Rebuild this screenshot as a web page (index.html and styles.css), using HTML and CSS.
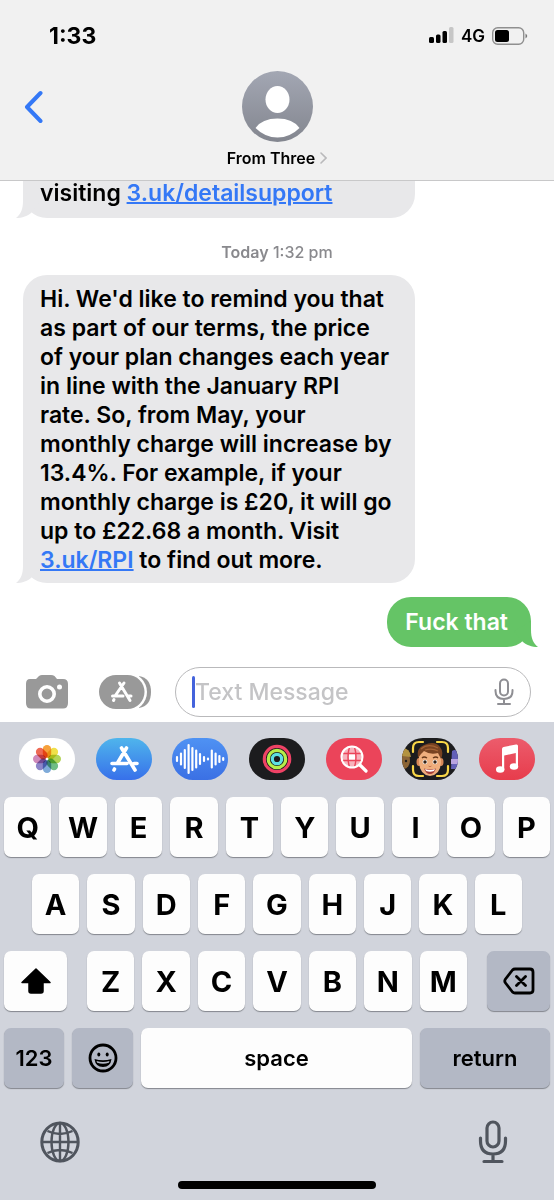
FILE: index.html
```
<!DOCTYPE html>
<html lang="en">
<head>
  <meta charset="UTF-8">
  <meta name="viewport" content="width=device-width, initial-scale=1">
  <title>Messages</title>
  <link rel="stylesheet" href="styles.css">
</head>
<body>

  <header class="header">
    <div class="status">
      <span class="time">1:33</span>
      <div class="status-right">
        <svg width="25" height="17" viewBox="0 0 25 17">
          <rect x="0" y="10" width="5" height="6" rx="1.5"/>
          <rect x="7" y="7.500" width="4.500" height="8.500" rx="1.500"/>
          <rect x="13.500" y="4" width="4.500" height="12" rx="1.500"/>
          <rect x="20" y="0" width="4.500" height="16" rx="1.500" fill="#c6c6c6"/>
        </svg>
        <span class="network">4G</span>
        <svg width="36" height="18" viewBox="0 0 36 18">
          <rect x="0.700" y="0.700" width="31" height="16.500" rx="5" fill="none" stroke="#8f8f8f" stroke-width="1.400"/>
          <rect x="3" y="3" width="14" height="12" rx="2.500"/>
          <path d="M33.500 6.500 Q37 9 33.500 11.500Z" fill="#777"/>
        </svg>
      </div>
    </div>
    <nav class="nav">
      <button class="back" aria-label="Back">
        <svg width="20" height="34" viewBox="0 0 20 34"><path d="M17.500 3 4 17l13.500 14" fill="none" stroke="#3478f6" stroke-width="4" stroke-linecap="round" stroke-linejoin="round"/></svg>
      </button>
      <button class="contact">
        <svg width="71" height="71" viewBox="0 0 71 71">
          <defs>
            <linearGradient id="avatar" x1="0" y1="0" x2="0" y2="1">
              <stop offset="0" stop-color="#a3a7b3"/>
              <stop offset="1" stop-color="#83868f"/>
            </linearGradient>
          </defs>
          <circle cx="35.500" cy="35.500" r="35.500" fill="url(#avatar)"/>
          <ellipse cx="35.500" cy="28.500" rx="12" ry="13.500" fill="#fff"/>
          <path d="M13.500 57 Q20 47.500 35.500 47.500 T57.500 57 Q48 66.500 35.500 66.500 T13.500 57Z" fill="#fff"/>
        </svg>
        <span class="contact-name">From Three
          <svg width="7" height="12" viewBox="0 0 7 12"><path d="M1 1l5 5-5 5" fill="none" stroke="#b9b9bb" stroke-width="1.600" stroke-linecap="round"/></svg>
        </span>
      </button>
    </nav>
  </header>

  <main class="messages">
    <div class="bubble received continued">
      visiting <a href="#">3.uk/detailsupport</a>
      <svg class="tail" width="24" height="26" viewBox="0 0 24 26"><path d="M7 0V9C7 17 5 22 0 26C6 26 12 24 16 20L24 10Z"/></svg>
    </div>

    <p class="timestamp"><b>Today</b> 1:32 pm</p>

    <div class="bubble received">
      Hi. We'd like to remind you that<br>
      as part of our terms, the price<br>
      of your plan changes each year<br>
      in line with the January RPI<br>
      rate. So, from May, your<br>
      monthly charge will increase by<br>
      13.4%. For example, if your<br>
      monthly charge is £20, it will go<br>
      up to £22.68 a month. Visit<br>
      <a href="#">3.uk/RPI</a> to find out more.
      <svg class="tail" width="24" height="26" viewBox="0 0 24 26"><path d="M7 0V9C7 17 5 22 0 26C6 26 12 24 16 20L24 10Z"/></svg>
    </div>

    <div class="bubble sent">
      Fuck that
      <svg class="tail" width="24" height="26" viewBox="0 0 24 26"><path d="M17 0V9C17 17 19 22 24 26C18 26 12 24 8 20L0 10Z"/></svg>
    </div>
  </main>

  <form class="compose">
    <button type="button" class="icon-button" aria-label="Camera">
      <svg width="44" height="36" viewBox="0 0 44 36">
        <path d="M5 5H11L14 2Q15.500 1 17 1H26Q28 1 29.500 2L32 5H38Q43 5 43 10V29Q43 34.500 38 34.500H6Q1 34.500 1 29V10Q1 5 5 5Z" fill="#999"/>
        <circle cx="22" cy="20" r="7.200" fill="none" stroke="#fff" stroke-width="3.600"/>
        <circle cx="34.500" cy="13" r="2.500" fill="#fff"/>
      </svg>
    </button>
    <button type="button" class="icon-button" aria-label="Apps">
      <svg width="52" height="34" viewBox="0 0 52 34">
        <path d="M40 1Q52 3 52 17T40 33Z" fill="#999"/>
        <rect x="-3" y="-2" width="51" height="38" rx="19" fill="#fff"/>
        <rect width="45.500" height="34" rx="17" fill="#999"/>
        <g fill="none" stroke="#fff" stroke-width="3" stroke-linecap="round">
          <path d="M25 8 16 21M20.500 8 31 25.500M13.500 21H24M29 21H32M15 24.500 14.500 25.500"/>
        </g>
      </svg>
    </button>
    <div class="field">
      <span class="caret"></span>
      <input type="text" placeholder="Text Message" aria-label="Text Message">
      <button type="button" class="icon-button" aria-label="Dictate">
        <svg width="20" height="28" viewBox="0 0 20 28" fill="none" stroke="#8e8e93" stroke-width="2" stroke-linecap="round">
          <rect x="6" y="1.500" width="8" height="16" rx="4"/>
          <path d="M1.500 12V13Q1.500 21 10 21T18.500 13V12M10 21V26M4 26H16"/>
        </svg>
      </button>
    </div>
  </form>

  <section class="keyboard">
    <div class="apps">
      <button class="app photos" aria-label="Photos">
        <svg width="30" height="30" viewBox="-15 -15 30 30">
          <g class="petals">
            <rect x="-4.200" y="-14" width="8.400" height="13" rx="4.200" fill="#f6a13c"/>
            <rect x="-4.200" y="-14" width="8.400" height="13" rx="4.200" fill="#f0e04a" transform="rotate(45)"/>
            <rect x="-4.200" y="-14" width="8.400" height="13" rx="4.200" fill="#b3d458" transform="rotate(90)"/>
            <rect x="-4.200" y="-14" width="8.400" height="13" rx="4.200" fill="#6fbd85" transform="rotate(135)"/>
            <rect x="-4.200" y="-14" width="8.400" height="13" rx="4.200" fill="#7fabd9" transform="rotate(180)"/>
            <rect x="-4.200" y="-14" width="8.400" height="13" rx="4.200" fill="#8e86c9" transform="rotate(225)"/>
            <rect x="-4.200" y="-14" width="8.400" height="13" rx="4.200" fill="#cf8abb" transform="rotate(270)"/>
            <rect x="-4.200" y="-14" width="8.400" height="13" rx="4.200" fill="#ee6a55" transform="rotate(315)"/>
          </g>
          <circle r="1.300" fill="#fff"/>
        </svg>
      </button>
      <button class="app store" aria-label="App Store">
        <svg width="30" height="28" viewBox="0 0 30 28" fill="none" stroke="#fff" stroke-width="3.600" stroke-linecap="round">
          <path d="M17.500 3 8.500 18M12.500 3 26 25M3 18.500H18M25 18.500H28M5.500 24 5 25"/>
        </svg>
      </button>
      <button class="app audio" aria-label="Audio Messages">
        <svg width="50" height="32" viewBox="0 0 50 32" stroke="#fff" stroke-width="2.200" stroke-linecap="round">
          <path d="M2 14V18M6 10.500V21.500M9.800 7V25M13.600 2V30M17.400 5V27M21.200 7.500V24.500M25 11V21M29 14V18M33 15.500V16.500M36.800 7.500V24.500M40.600 10.500V21.500M44.400 13V19M48.200 15V17"/>
        </svg>
      </button>
      <button class="app activity" aria-label="Activity">
        <svg width="30" height="30" viewBox="0 0 30 30" fill="none" stroke-width="3.200">
          <circle cx="15" cy="15" r="12.700" stroke="#ef4265"/>
          <circle cx="15" cy="15" r="8.700" stroke="#b5ee4b"/>
          <circle cx="15" cy="15" r="4.700" stroke="#5de0e2"/>
        </svg>
      </button>
      <button class="app images" aria-label="Images">
        <svg width="28" height="28" viewBox="0 0 28 28" fill="none" stroke="#fff" stroke-linecap="round">
          <circle cx="12" cy="12" r="10.500" fill="#f7b3bd" stroke="none"/>
          <path d="M9.500 2Q6.500 12 9.500 22M14.500 2Q17.500 12 14.500 22M2 8.500H22M2 15.500H22" stroke="#eb445a" stroke-width="1.400"/>
          <rect x="9" y="9.500" width="6" height="5" fill="#fff" stroke="none"/>
          <circle cx="12" cy="12" r="10.500" stroke-width="2"/>
          <path d="M20 20 26 26" stroke-width="3.200"/>
        </svg>
      </button>
      <button class="app memoji" aria-label="Memoji">
        <svg width="56" height="42" viewBox="0 0 56 42">
          <ellipse cx="2" cy="22" rx="6" ry="9" fill="#8b6436"/>
          <path d="M0 10Q8 10 9 19L0 18Z" fill="#b39340"/>
          <circle cx="4" cy="23" r="1.200" fill="#1c1c1e"/>
          <path d="M50 13Q55 10 56 17V31H49Z" fill="#6360b7"/>
          <path d="M49 21H56V26H49Z" fill="#b9a4df"/>
          <ellipse cx="17" cy="24" rx="2.500" ry="4" fill="#d88959"/>
          <ellipse cx="39" cy="24" rx="2.500" ry="4" fill="#d88959"/>
          <path d="M17 18Q17 10 28 10T39 18V25Q38 37 28 38Q18 37 17 25Z" fill="#efae7d"/>
          <path d="M16 20Q14 10 22 7Q33 2 38 9Q42 14 39 21L36 15Q28 17 22 13L19 16Z" fill="#794322"/>
          <path d="M19 11Q26 5 36 10M23 12Q30 10 36 13" fill="none" stroke="#a46336" stroke-width="1.200"/>
          <path d="M20 20Q22 18 25 20M31 20Q34 18 36 20" fill="none" stroke="#653719" stroke-width="1.400"/>
          <ellipse cx="23" cy="24" rx="2.400" ry="2.200" fill="#fff"/>
          <ellipse cx="33" cy="24" rx="2.400" ry="2.200" fill="#fff"/>
          <circle cx="23" cy="24" r="1.700" fill="#352114"/>
          <circle cx="33" cy="24" r="1.700" fill="#352114"/>
          <path d="M26.500 28Q28 29.500 29.500 28" fill="none" stroke="#c77950"/>
          <path d="M22 30.500Q28 32.500 34 30.500Q32 36 28 36T22 30.500Z" fill="#a23d37"/>
          <path d="M23 31Q28 33 33 31L32 33Q28 34.500 24 33Z" fill="#fff"/>
          <path d="M11 14V10Q11 4 17 4H21M35 4H40Q46 4 46 10V14M11 28V32Q11 38 17 38H21M35 38H40Q46 38 46 32V28" fill="none" stroke="#f8d648" stroke-width="2.200" stroke-linecap="round"/>
        </svg>
      </button>
      <button class="app music" aria-label="Music">
        <svg width="24" height="30" viewBox="0 0 24 30">
          <path d="M7 5Q7 3.500 8.500 3L21 .500Q23 0 23 2V23H20.800V9L9.200 11.500V26H7Z" fill="#fff"/>
          <ellipse cx="5.200" cy="25.500" rx="4.200" ry="3.300" fill="#fff"/>
          <ellipse cx="19" cy="22.500" rx="4.200" ry="3.300" fill="#fff"/>
        </svg>
      </button>
    </div>

    <div class="keys">
      <div class="row">
        <button class="key">Q</button>
        <button class="key">W</button>
        <button class="key">E</button>
        <button class="key">R</button>
        <button class="key">T</button>
        <button class="key">Y</button>
        <button class="key">U</button>
        <button class="key">I</button>
        <button class="key">O</button>
        <button class="key">P</button>
      </div>
      <div class="row row-middle">
        <button class="key">A</button>
        <button class="key">S</button>
        <button class="key">D</button>
        <button class="key">F</button>
        <button class="key">G</button>
        <button class="key">H</button>
        <button class="key">J</button>
        <button class="key">K</button>
        <button class="key">L</button>
      </div>
      <div class="row row-shift">
        <button class="key" aria-label="Shift">
          <svg width="32" height="28" viewBox="0 0 32 28"><path d="M16 2 30 15.500H23V24Q23 26 21 26H11Q9 26 9 24V15.500H2Z" stroke="#000" stroke-width="1.500" stroke-linejoin="round"/></svg>
        </button>
        <div class="row letters">
          <button class="key">Z</button>
          <button class="key">X</button>
          <button class="key">C</button>
          <button class="key">V</button>
          <button class="key">B</button>
          <button class="key">N</button>
          <button class="key">M</button>
        </div>
        <button class="key dark" aria-label="Delete">
          <svg width="32" height="28" viewBox="0 0 32 28" fill="none" stroke="#000" stroke-width="2.800" stroke-linecap="round" stroke-linejoin="round">
            <path d="M12 2H27Q30 2 30 5V23Q30 26 27 26H12Q10.500 26 9.500 25L2.500 16Q1 14 2.500 12L9.500 3Q10.500 2 12 2ZM13.500 9.500 22.500 18.500M22.500 9.500 13.500 18.500"/>
          </svg>
        </button>
      </div>
      <div class="row row-bottom">
        <button class="key dark word">123</button>
        <button class="key dark" aria-label="Emoji">
          <svg width="30" height="30" viewBox="0 0 30 30">
            <circle cx="15" cy="15" r="13" fill="none" stroke="#000" stroke-width="2.800"/>
            <ellipse cx="10.800" cy="11.500" rx="1.500" ry="2.100"/>
            <ellipse cx="19.200" cy="11.500" rx="1.500" ry="2.100"/>
            <path d="M6.500 16Q15 18.500 23.500 16Q22.500 24 15 24T6.500 16Z"/>
            <path d="M8.500 18Q15 19.800 21.500 18L20.800 19.800Q15 21.500 9.200 19.800Z" fill="#b3b8c5"/>
          </svg>
        </button>
        <button class="key word">space</button>
        <button class="key dark word">return</button>
      </div>
    </div>

    <div class="bottom">
      <button class="icon-button" aria-label="Next keyboard">
        <svg width="40" height="42" viewBox="0 0 40 42" fill="none" stroke="#50555e" stroke-width="2.400">
          <ellipse cx="20" cy="21" rx="18.200" ry="19" stroke-width="3"/>
          <ellipse cx="20" cy="21" rx="8.500" ry="19"/>
          <path d="M20 2V40M2 21H38M7.500 10Q20 16 32.500 10M7.500 32Q20 26 32.500 32"/>
        </svg>
      </button>
      <button class="icon-button" aria-label="Dictation">
        <svg width="30" height="44" viewBox="0 0 30 44" fill="none" stroke="#50555e" stroke-width="3.200" stroke-linecap="round">
          <rect x="9" y="2" width="12" height="25" rx="6"/>
          <path d="M2.500 18V21Q2.500 34 15 34T27.500 21V18M15 34V41M6 41.500H24"/>
        </svg>
      </button>
    </div>
    <div class="home-indicator"></div>
  </section>

</body>
</html>
```
FILE: styles.css
```
* {
  box-sizing: border-box;
}
body {
  margin: 0;
  min-height: 100vh;
  display: flex;
  flex-direction: column;
  background: #fff;
  color: #000;
  font-family: Inter, "Liberation Sans", sans-serif;
  font-weight: 500;
}
button {
  padding: 0;
  border: none;
  background: none;
  color: inherit;
  font: inherit;
  cursor: pointer;
}
svg {
  display: block;
}

/* header */
.header {
  background: #f1f1f1;
  border-bottom: 1px solid #c8c8c9;
}
.status {
  display: flex;
  justify-content: space-between;
  align-items: center;
  height: 71px;
  padding: 0 26px 0 49px;
}
.time {
  font-size: 23px;
  font-weight: 700;
}
.status-right {
  display: flex;
  align-items: center;
  gap: 7px;
}
.network {
  font-size: 17px;
  font-weight: 600;
}
.nav {
  display: grid;
  grid-template-columns: 1fr auto 1fr;
  align-items: start;
  padding-bottom: 11px;
}
.back {
  justify-self: start;
  display: flex;
  align-items: center;
  height: 71px;
  padding: 0 23px;
}
.contact {
  display: flex;
  flex-direction: column;
  align-items: center;
  gap: 5px;
}
.contact-name {
  display: flex;
  align-items: center;
  gap: 5px;
  font-size: 16px;
  line-height: 22px;
}

/* conversation */
.messages {
  flex: 1;
  display: flex;
  flex-direction: column;
  align-items: flex-start;
  padding: 0 23px;
}
.bubble {
  position: relative;
  max-width: 392px;
  padding: 10px 17px 8px;
  border-radius: 24px;
  font-size: 23px;
  line-height: 29px;
}
.received {
  width: 100%;
  background: #e8e8ea;
}
.continued {
  padding: 0 17px 12px;
  border-radius: 0 0 24px 24px;
  line-height: 25px;
}
.bubble a {
  color: #3478f6;
  text-decoration-thickness: 2px;
}
.sent {
  align-self: flex-end;
  margin-top: 14px;
  padding: 11px 23px 10px 18px;
  background: #65c466;
  color: #fff;
}
.tail {
  position: absolute;
  bottom: 0;
}
.received .tail {
  left: -7px;
  fill: #e8e8ea;
}
.sent .tail {
  right: -7px;
  fill: #65c466;
}
.timestamp {
  align-self: center;
  margin: 24px 0 13px;
  color: #89898d;
  font-size: 16px;
  line-height: 20px;
}
.timestamp b {
  font-weight: 600;
}

/* text entry */
.compose {
  display: flex;
  align-items: center;
  padding: 20px 23px 5px 25px;
}
.compose .icon-button {
  margin-right: 30px;
}
.compose .icon-button + .icon-button {
  margin-right: 24px;
}
.field {
  flex: 1;
  min-width: 0;
  display: flex;
  align-items: center;
  height: 50px;
  padding: 0 16px;
  border: 1px solid #b9b9bb;
  border-radius: 25px;
}
.field .icon-button {
  margin: 0;
}
.caret {
  width: 3px;
  height: 32px;
  border-radius: 2px;
  background: #4463dc;
}
.field input {
  flex: 1;
  min-width: 0;
  padding: 0;
  border: none;
  outline: none;
  background: none;
  font: inherit;
  font-size: 23px;
}
.field input::placeholder {
  color: #c4c4c6;
}

/* keyboard */
.keyboard {
  background: #d1d4dc;
}
.apps {
  display: flex;
  justify-content: space-between;
  padding: 16px 19px 17px;
}
.app {
  display: flex;
  align-items: center;
  justify-content: center;
  width: 56px;
  height: 42px;
  border-radius: 21px;
  overflow: hidden;
}
.photos {
  background: #fff;
}
.petals rect {
  mix-blend-mode: multiply;
}
.store {
  background: linear-gradient(#4fb5ec, #3770ea);
}
.audio {
  background: linear-gradient(#4f92f3, #3b70e4);
}
.activity,
.memoji {
  background: #1c1c1e;
}
.images {
  background: #eb445a;
}
.music {
  background: linear-gradient(#ec5c6c, #e73c4c);
}
.keys {
  display: flex;
  flex-direction: column;
  gap: 17px;
  padding: 0 4px;
}
.row {
  display: flex;
  gap: 8px;
}
.row-middle {
  padding: 0 28px;
}
.key {
  flex: 1;
  min-width: 0;
  display: flex;
  align-items: center;
  justify-content: center;
  height: 60px;
  border-radius: 7px;
  background: #fdfdfd;
  box-shadow: 0 1px 1px #83868d;
  font-size: 29px;
  font-weight: 700;
}
.row-shift {
  display: grid;
  grid-template-columns: 63px 1fr 63px;
  gap: 20px;
}
.row-bottom {
  display: grid;
  grid-template-columns: 60px 61px 1fr 130px;
}
.dark {
  background: #b3b8c5;
}
.word {
  font-size: 22px;
  font-weight: 600;
}
.bottom {
  display: flex;
  align-items: center;
  justify-content: space-between;
  padding: 32px 46px 17px 40px;
}
.home-indicator {
  width: 198px;
  height: 8px;
  margin: 0 auto 11px;
  border-radius: 4px;
  background: #000;
}
.bubble,
.contact-name,
.timestamp b {
  font-weight: 600;
}
```
